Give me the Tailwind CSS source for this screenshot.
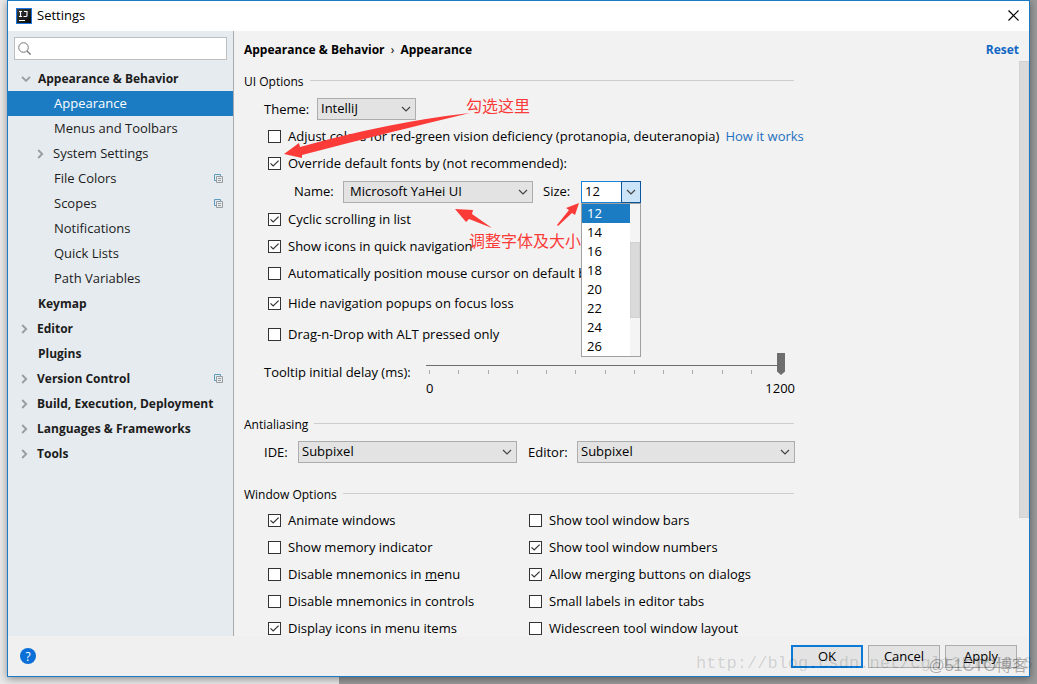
<!DOCTYPE html>
<html lang="en">
<head>
<meta charset="utf-8">
<title>Settings</title>
<script src="https://cdn.jsdelivr.net/npm/@tailwindcss/browser@4"></script>
</head>
<body class="h-screen overflow-hidden bg-linear-to-r from-[#e9e9e9] from-[339px] to-[#9a9a9a] to-[339px] font-['Open_Sans','Noto_Sans_CJK_SC',sans-serif] text-[13px] leading-[19px] text-black">

<svg class="hidden" aria-hidden="true">
  <symbol id="down" viewBox="0 0 10 6"><path d="M1 1l4 4 4-4" fill="none" stroke="currentColor" stroke-width="1.2"/></symbol>
  <symbol id="right" viewBox="0 0 7 10"><path d="M1.2 1l4 4-4 4" fill="none" stroke="currentColor" stroke-width="1.9"/></symbol>
  <symbol id="copy" viewBox="0 0 9 9"><path d="M2 6.500H.500V.500h6V2" fill="none" stroke="#5c9bbf"/><path d="M2.500 2.500h6v6h-6zM4 4.500h3M4 6.500h3" fill="none" stroke="#9a9da0"/></symbol>
  <symbol id="tick" viewBox="0 0 13 13"><path d="M2.500 6.300l2.700 2.700 5.400-5.400" fill="none" stroke="#333" stroke-width="1.2"/></symbol>
</svg>

<div class="flex h-full flex-col px-[7px] pb-[7px]">
<div class="relative flex min-h-0 flex-1 flex-col border border-[#1b7ac4] bg-[#f2f2f2] shadow-[0_2px_8px_rgba(0,0,0,0.4)]">

  <header class="flex h-[30px] shrink-0 items-center bg-white pr-[10px] pb-px pl-2">
    <svg class="size-4" viewBox="0 0 16 16" aria-hidden="true">
      <defs><linearGradient id="ij" x2="1" y2="1"><stop stop-color="#3c3c40"/><stop offset="1" stop-color="#08080a"/></linearGradient></defs>
      <rect width="16" height="16" fill="#1478e0"/><rect x="1" y="1" width="14" height="14" fill="url(#ij)"/>
      <path d="M3 3.500h3M4.500 3.500v5M3 8.500h3M8 3.500h3v4q0 1-1.200 1H7.500" fill="none" stroke="#fff" stroke-width="1.100"/><path d="M3 12.500h6" stroke="#fff"/>
    </svg>
    <h1 class="ml-[5px]">Settings</h1>
    <button class="ml-auto" aria-label="Close"><svg class="size-[11px]" viewBox="0 0 11 11"><path d="M.500.500l10 10M10.500.500l-10 10" stroke="#000" stroke-width="1.200"/></svg></button>
  </header>

  <div class="flex min-h-0 flex-1">
    <nav class="w-[226px] shrink-0 border-r border-[#a8abae] bg-[#e6ebef] pt-1.5 text-[#1c1c1c]" aria-label="Settings">
      <label class="mx-1.5 mb-1.5 flex h-[23px] items-center border border-[#bcbec0] bg-white pl-[3px]">
        <svg class="size-[13px] shrink-0" viewBox="0 0 13 13"><circle cx="5.500" cy="5.500" r="4.800" fill="none" stroke="#777"/><path d="M9 9l3.600 3.600" stroke="#777" stroke-width="1.300"/></svg>
        <input type="text" aria-label="Search settings" class="min-w-0 flex-1 px-1 outline-none">
      </label>
      <ul>
        <li class="flex h-[25px] items-center pl-[13px] text-[12px] font-bold"><svg class="mr-[7px] h-1.5 w-2.5 text-[#9a9da0]" viewBox="0 0 10 6"><path d="M1 .800l4 4 4-4" fill="none" stroke="currentColor" stroke-width="1.900"/></svg>Appearance &amp; Behavior</li>
        <li class="flex h-[25px] items-center bg-[#1b7cc4] pl-[46px] text-white">Appearance</li>
        <li class="flex h-[25px] items-center pl-[46px]">Menus and Toolbars</li>
        <li class="flex h-[25px] items-center pl-[29px]"><svg class="mr-[9px] h-2.5 w-[7px] text-[#9a9da0]"><use href="#right"/></svg>System Settings</li>
        <li class="flex h-[25px] items-center justify-between pr-2.5 pl-[46px]">File Colors<svg class="size-[9px]"><use href="#copy"/></svg></li>
        <li class="flex h-[25px] items-center justify-between pr-2.5 pl-[46px]">Scopes<svg class="size-[9px]"><use href="#copy"/></svg></li>
        <li class="flex h-[25px] items-center pl-[46px]">Notifications</li>
        <li class="flex h-[25px] items-center pl-[46px]">Quick Lists</li>
        <li class="flex h-[25px] items-center pl-[46px]">Path Variables</li>
        <li class="flex h-[25px] items-center pl-[30px] text-[12px] font-bold">Keymap</li>
        <li class="flex h-[25px] items-center pl-[13px] text-[12px] font-bold"><svg class="mr-[9px] h-2.5 w-[7px] text-[#9a9da0]"><use href="#right"/></svg>Editor</li>
        <li class="flex h-[25px] items-center pl-[30px] text-[12px] font-bold">Plugins</li>
        <li class="flex h-[25px] items-center pr-2.5 pl-[13px] text-[12px] font-bold"><svg class="mr-[9px] h-2.5 w-[7px] text-[#9a9da0]"><use href="#right"/></svg>Version Control<svg class="ml-auto size-[9px]"><use href="#copy"/></svg></li>
        <li class="flex h-[25px] items-center pl-[13px] text-[12px] font-bold"><svg class="mr-[9px] h-2.5 w-[7px] text-[#9a9da0]"><use href="#right"/></svg>Build, Execution, Deployment</li>
        <li class="flex h-[25px] items-center pl-[13px] text-[12px] font-bold"><svg class="mr-[9px] h-2.5 w-[7px] text-[#9a9da0]"><use href="#right"/></svg>Languages &amp; Frameworks</li>
        <li class="flex h-[25px] items-center pl-[13px] text-[12px] font-bold"><svg class="mr-[9px] h-2.5 w-[7px] text-[#9a9da0]"><use href="#right"/></svg>Tools</li>
      </ul>
    </nav>

    <main class="flex min-w-0 flex-1 flex-col pl-2.5">
      <div class="flex h-[30px] shrink-0 items-center justify-between pt-1.5 pr-2.5 text-[12px] font-bold">
        <h2>Appearance &amp; Behavior <span class="mx-[3px] font-normal">›</span> Appearance</h2>
        <button class="text-[#1168c4]">Reset</button>
      </div>
      <div class="flex min-h-0 flex-1 justify-between overflow-hidden">
      <form class="w-[551px] shrink-0 whitespace-nowrap pt-[7px]">
        <section>
          <h3 class="flex h-[26px] items-center gap-1.5 pr-px text-[12px] after:mb-0.5 after:h-px after:flex-1 after:bg-[#cdcdcd]">UI Options</h3>
          <div class="mt-0.5 mb-px flex h-[26px] items-center pl-5">
            <label for="theme" class="w-[53px]">Theme:</label>
            <div class="relative"><select id="theme" class="block h-[22px] w-[99px] appearance-none border border-[#adadad] bg-[#e3e3e3] pb-px pl-[3px]"><option>IntelliJ</option></select><svg class="pointer-events-none absolute top-2 right-[5px] h-1.5 w-2.5 text-[#444]"><use href="#down"/></svg></div>
          </div>
          <div class="flex h-[27px] items-center gap-1.5 pl-6">
            <label class="flex items-center gap-[7px]"><span class="relative size-[13px]"><input type="checkbox" class="peer block size-[13px] appearance-none border border-[#333] bg-white"><svg class="absolute inset-0 hidden size-[13px] peer-checked:block"><use href="#tick"/></svg></span>Adjust colors for red-green vision deficiency (protanopia, deuteranopia)</label>
            <a href="#how" class="text-[#1d6fc0]">How it works</a>
          </div>
          <label class="flex h-[27px] items-center gap-[7px] pl-6"><span class="relative size-[13px]"><input type="checkbox" checked class="peer block size-[13px] appearance-none border border-[#333] bg-white"><svg class="absolute inset-0 hidden size-[13px] peer-checked:block"><use href="#tick"/></svg></span>Override default fonts by (not recommended):</label>
          <div class="flex h-[29px] items-center pl-[50px]">
            <label for="font" class="w-[49px]">Name:</label>
            <div class="relative"><select id="font" class="block h-[22px] w-[190px] appearance-none border border-[#adadad] bg-[#e3e3e3] pb-px pl-1.5"><option>Microsoft YaHei UI</option></select><svg class="pointer-events-none absolute top-2 right-[5px] h-1.5 w-2.5 text-[#444]"><use href="#down"/></svg></div>
            <label for="size" class="ml-2.5 w-[38px]">Size:</label>
            <div class="relative flex h-[22px] w-[60px]">
              <input id="size" type="text" value="12" class="w-[40px] border border-r-0 border-[#1883d7] bg-white pb-px pl-[3px] outline-none">
              <button type="button" aria-label="Choose size" class="flex w-[20px] items-center justify-center border border-[#0a57a0] bg-[#cce4f7] text-[#444]"><svg class="h-1.5 w-2.5"><use href="#down"/></svg></button>
              <div class="absolute top-[22px] left-0 z-20 flex w-[60px] border border-[#a0a0a0] bg-white">
                <ul role="listbox" aria-label="Size" class="flex-1 leading-[19px] *:pl-[5px]">
                  <li role="option" aria-selected="true" class="bg-[#1b7cc4] text-white">12</li><li role="option">14</li><li role="option">16</li><li role="option">18</li><li role="option">20</li><li role="option">22</li><li role="option">24</li><li role="option">26</li>
                </ul>
                <div class="w-2.5 bg-[#f4f4f4] pt-[38px]"><div class="h-[76px] border border-[#d2d2d2] bg-[#dadada]"></div></div>
              </div>
            </div>
          </div>
          <label class="flex h-[27px] items-center gap-[7px] pl-6"><span class="relative size-[13px]"><input type="checkbox" checked class="peer block size-[13px] appearance-none border border-[#333] bg-white"><svg class="absolute inset-0 hidden size-[13px] peer-checked:block"><use href="#tick"/></svg></span>Cyclic scrolling in list</label>
          <label class="flex h-[27px] items-center gap-[7px] pl-6"><span class="relative size-[13px]"><input type="checkbox" checked class="peer block size-[13px] appearance-none border border-[#333] bg-white"><svg class="absolute inset-0 hidden size-[13px] peer-checked:block"><use href="#tick"/></svg></span>Show icons in quick navigation</label>
          <label class="flex h-[27px] items-center gap-[7px] pl-6"><span class="relative size-[13px] shrink-0"><input type="checkbox" class="peer block size-[13px] appearance-none border border-[#333] bg-white"><svg class="absolute inset-0 hidden size-[13px] peer-checked:block"><use href="#tick"/></svg></span>Automatically position mouse cursor on default bu</label>
          <label class="mt-[3px] flex h-[27px] items-center gap-[7px] pl-6"><span class="relative size-[13px]"><input type="checkbox" checked class="peer block size-[13px] appearance-none border border-[#333] bg-white"><svg class="absolute inset-0 hidden size-[13px] peer-checked:block"><use href="#tick"/></svg></span>Hide navigation popups on focus loss</label>
          <label class="mt-1 flex h-[27px] items-center gap-[7px] pl-6"><span class="relative size-[13px]"><input type="checkbox" class="peer block size-[13px] appearance-none border border-[#333] bg-white"><svg class="absolute inset-0 hidden size-[13px] peer-checked:block"><use href="#tick"/></svg></span>Drag-n-Drop with ALT pressed only</label>
          <div class="mt-[5px] flex pl-5">
            <label for="delay" class="w-[162px] pt-2.5">Tooltip initial delay (ms):</label>
            <div class="relative w-[359px]">
              <div class="absolute top-[17px] right-[4px] left-[3px] flex h-1 justify-between *:w-px *:bg-[#aaa]"><i></i><i></i><i></i><i></i><i></i><i></i><i></i><i></i><i></i><i></i><i></i><i></i><i></i></div>
              <input id="delay" type="range" min="0" max="1200" value="1200" class="relative block h-[22px] w-full appearance-none bg-linear-to-r from-[#6e6e6e] to-[#6e6e6e] bg-[length:100%_1px] bg-[position:0_12px] bg-no-repeat [&::-webkit-slider-thumb]:h-[22px] [&::-webkit-slider-thumb]:w-2 [&::-webkit-slider-thumb]:appearance-none [&::-webkit-slider-thumb]:bg-[#6e6e6e] [&::-webkit-slider-thumb]:[clip-path:polygon(0_0,100%_0,100%_84%,50%_100%,0_84%)]">
              <div class="-mr-2.5 mt-1 mb-px flex justify-between"><span>0</span><span>1200</span></div>
            </div>
          </div>
        </section>
        <section class="mt-3">
          <h3 class="flex h-[26px] items-center gap-1.5 pr-px text-[12px] after:mb-0.5 after:h-px after:flex-1 after:bg-[#cdcdcd]">Antialiasing</h3>
          <div class="mt-0.5 flex h-[26px] items-center pl-5">
            <label for="ide" class="w-[34px]">IDE:</label>
            <div class="relative"><select id="ide" class="block h-[22px] w-[219px] appearance-none border border-[#adadad] bg-[#e3e3e3] pb-px pl-[3px]"><option>Subpixel</option></select><svg class="pointer-events-none absolute top-2 right-[5px] h-1.5 w-2.5 text-[#444]"><use href="#down"/></svg></div>
            <label for="editor" class="ml-[11px] w-[49px]">Editor:</label>
            <div class="relative"><select id="editor" class="block h-[22px] w-[218px] appearance-none border border-[#adadad] bg-[#e3e3e3] pb-px pl-[3px]"><option>Subpixel</option></select><svg class="pointer-events-none absolute top-2 right-[5px] h-1.5 w-2.5 text-[#444]"><use href="#down"/></svg></div>
          </div>
        </section>
        <section class="mt-4">
          <h3 class="flex h-[26px] items-center gap-1.5 pr-px text-[12px] after:mb-0.5 after:h-px after:flex-1 after:bg-[#cdcdcd]">Window Options</h3>
          <div class="grid grid-cols-[261px_1fr] pl-6">
            <label class="flex h-[27px] items-center gap-[7px]"><span class="relative size-[13px]"><input type="checkbox" checked class="peer block size-[13px] appearance-none border border-[#333] bg-white"><svg class="absolute inset-0 hidden size-[13px] peer-checked:block"><use href="#tick"/></svg></span>Animate windows</label>
            <label class="flex h-[27px] items-center gap-[7px]"><span class="relative size-[13px]"><input type="checkbox" class="peer block size-[13px] appearance-none border border-[#333] bg-white"><svg class="absolute inset-0 hidden size-[13px] peer-checked:block"><use href="#tick"/></svg></span>Show tool window bars</label>
            <label class="flex h-[27px] items-center gap-[7px]"><span class="relative size-[13px]"><input type="checkbox" class="peer block size-[13px] appearance-none border border-[#333] bg-white"><svg class="absolute inset-0 hidden size-[13px] peer-checked:block"><use href="#tick"/></svg></span>Show memory indicator</label>
            <label class="flex h-[27px] items-center gap-[7px]"><span class="relative size-[13px]"><input type="checkbox" checked class="peer block size-[13px] appearance-none border border-[#333] bg-white"><svg class="absolute inset-0 hidden size-[13px] peer-checked:block"><use href="#tick"/></svg></span>Show tool window numbers</label>
            <label class="flex h-[27px] items-center gap-[7px]"><span class="relative size-[13px]"><input type="checkbox" class="peer block size-[13px] appearance-none border border-[#333] bg-white"><svg class="absolute inset-0 hidden size-[13px] peer-checked:block"><use href="#tick"/></svg></span><span>Disable mnemonics in <u>m</u>enu</span></label>
            <label class="flex h-[27px] items-center gap-[7px]"><span class="relative size-[13px]"><input type="checkbox" checked class="peer block size-[13px] appearance-none border border-[#333] bg-white"><svg class="absolute inset-0 hidden size-[13px] peer-checked:block"><use href="#tick"/></svg></span>Allow merging buttons on dialogs</label>
            <label class="flex h-[27px] items-center gap-[7px]"><span class="relative size-[13px]"><input type="checkbox" class="peer block size-[13px] appearance-none border border-[#333] bg-white"><svg class="absolute inset-0 hidden size-[13px] peer-checked:block"><use href="#tick"/></svg></span>Disable mnemonics in controls</label>
            <label class="flex h-[27px] items-center gap-[7px]"><span class="relative size-[13px]"><input type="checkbox" class="peer block size-[13px] appearance-none border border-[#333] bg-white"><svg class="absolute inset-0 hidden size-[13px] peer-checked:block"><use href="#tick"/></svg></span>Small labels in editor tabs</label>
            <label class="flex h-[27px] items-center gap-[7px]"><span class="relative size-[13px]"><input type="checkbox" checked class="peer block size-[13px] appearance-none border border-[#333] bg-white"><svg class="absolute inset-0 hidden size-[13px] peer-checked:block"><use href="#tick"/></svg></span>Display icons in menu items</label>
            <label class="flex h-[27px] items-center gap-[7px]"><span class="relative size-[13px]"><input type="checkbox" class="peer block size-[13px] appearance-none border border-[#333] bg-white"><svg class="absolute inset-0 hidden size-[13px] peer-checked:block"><use href="#tick"/></svg></span>Widescreen tool window layout</label>
          </div>
        </section>
      </form>
      <div class="h-[457px] w-2.5 shrink-0 border border-[#d2d2d2] bg-[#dadada]"></div>
      </div>
    </main>
  </div>

  <footer class="flex h-10 shrink-0 items-center gap-[5px] bg-[#f0f0f0] pr-3 pl-3">
    <button aria-label="Help" class="mr-auto flex size-4 items-center justify-center rounded-full bg-[#0a6fd6] text-[12px] text-white">?</button>
    <button class="h-[23px] w-[72px] border-2 border-[#0a7ad6] bg-[#e3e3e3] leading-none">OK</button>
    <button class="h-[23px] w-[72px] border border-[#adadad] bg-[#e3e3e3] leading-none">Cancel</button>
    <button class="h-[23px] w-[72px] border border-[#adadad] bg-[#e3e3e3] leading-none"><u>A</u>pply</button>
  </footer>
</div>
</div>

<!-- Hand-drawn notes over the dialog -->
<svg class="pointer-events-none absolute top-0 left-0 z-10 h-[240px] w-[600px]" viewBox="0 0 600 240" fill="#fb3b38" aria-hidden="true">
  <path d="M284 154L299 143 300 147Q390 122 470 113 390 132 302 155L302 158z"/>
  <path d="M455 209L473 210 472 214 492 228 469 219 466 222z"/>
  <path d="M579 203L575 215 572 213 558 226 557 225 569 210 566 208z"/>
</svg>
<p class="pointer-events-none absolute top-[96px] left-[466px] z-10 font-['Noto_Sans_CJK_SC',sans-serif] text-[16px] text-[#fb3b38]">勾选这里</p>
<p class="pointer-events-none absolute top-[231px] left-[469px] z-10 font-['Noto_Sans_CJK_SC',sans-serif] text-[16px] text-[#fb3b38]">调整字体及大小</p>
<p class="pointer-events-none absolute top-[654px] left-[696px] z-10 font-['Liberation_Mono',monospace] text-[17px] leading-5 text-black/15">http://blog.csdn.net/cgl125167016</p>
<p class="pointer-events-none absolute right-[9px] bottom-[8px] z-10 font-['Liberation_Sans','Noto_Sans_CJK_SC',sans-serif] text-[16px] leading-5 text-black/30">@51CTO博客</p>
</body>
</html>
